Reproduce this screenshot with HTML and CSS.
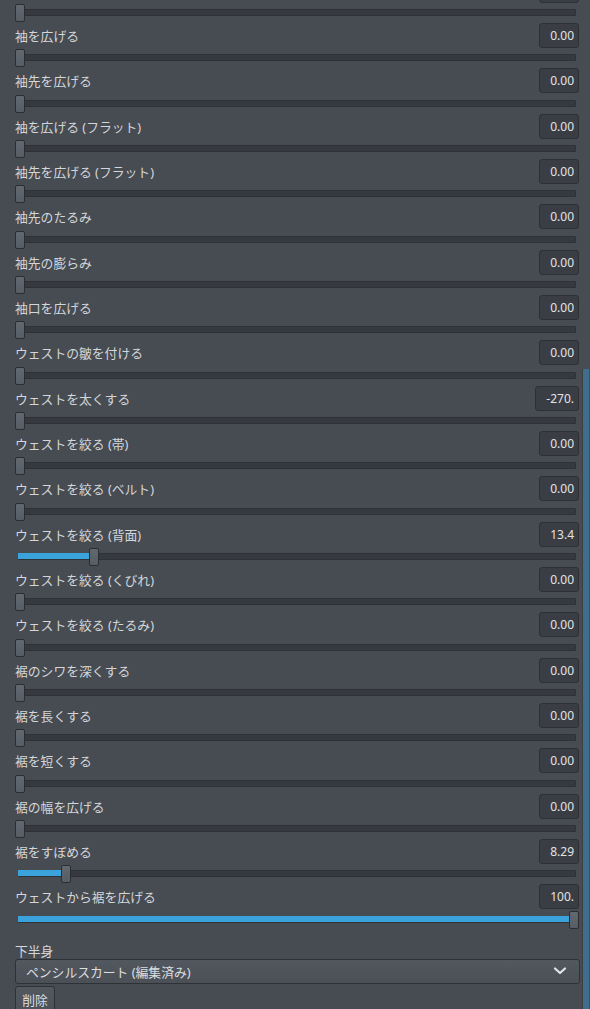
FILE: index.html
```html
<!DOCTYPE html>
<html lang="ja">
<head>
<meta charset="utf-8">
<link rel="stylesheet" href="styles.css">
</head>
<body>
<div class="window">
  <div class="panel">
    <div class="list">
      <div class="row first">
        <div class="head"><span class="label"></span><span class="num empty"></span></div>
        <div class="slider"><div class="track"></div><div class="thumb" style="left:0px"></div></div>
      </div>
      <div class="row">
        <div class="head"><span class="label">袖を広げる</span><span class="num">0.00</span></div>
        <div class="slider"><div class="track"></div><div class="thumb" style="left:0px"></div></div>
      </div>
      <div class="row">
        <div class="head"><span class="label">袖先を広げる</span><span class="num">0.00</span></div>
        <div class="slider"><div class="track"></div><div class="thumb" style="left:0px"></div></div>
      </div>
      <div class="row">
        <div class="head"><span class="label">袖を広げる (フラット)</span><span class="num">0.00</span></div>
        <div class="slider"><div class="track"></div><div class="thumb" style="left:0px"></div></div>
      </div>
      <div class="row">
        <div class="head"><span class="label">袖先を広げる (フラット)</span><span class="num">0.00</span></div>
        <div class="slider"><div class="track"></div><div class="thumb" style="left:0px"></div></div>
      </div>
      <div class="row">
        <div class="head"><span class="label">袖先のたるみ</span><span class="num">0.00</span></div>
        <div class="slider"><div class="track"></div><div class="thumb" style="left:0px"></div></div>
      </div>
      <div class="row">
        <div class="head"><span class="label">袖先の膨らみ</span><span class="num">0.00</span></div>
        <div class="slider"><div class="track"></div><div class="thumb" style="left:0px"></div></div>
      </div>
      <div class="row">
        <div class="head"><span class="label">袖口を広げる</span><span class="num">0.00</span></div>
        <div class="slider"><div class="track"></div><div class="thumb" style="left:0px"></div></div>
      </div>
      <div class="row">
        <div class="head"><span class="label">ウェストの皺を付ける</span><span class="num">0.00</span></div>
        <div class="slider"><div class="track"></div><div class="thumb" style="left:0px"></div></div>
      </div>
      <div class="row">
        <div class="head"><span class="label">ウェストを太くする</span><span class="num">-270.</span></div>
        <div class="slider"><div class="track"></div><div class="thumb" style="left:0px"></div></div>
      </div>
      <div class="row">
        <div class="head"><span class="label">ウェストを絞る (帯)</span><span class="num">0.00</span></div>
        <div class="slider"><div class="track"></div><div class="thumb" style="left:0px"></div></div>
      </div>
      <div class="row">
        <div class="head"><span class="label">ウェストを絞る (ベルト)</span><span class="num">0.00</span></div>
        <div class="slider"><div class="track"></div><div class="thumb" style="left:0px"></div></div>
      </div>
      <div class="row">
        <div class="head"><span class="label">ウェストを絞る (背面)</span><span class="num">13.4</span></div>
        <div class="slider"><div class="track"></div><div class="fill" style="width:72px"></div><div class="thumb" style="left:74px"></div></div>
      </div>
      <div class="row">
        <div class="head"><span class="label">ウェストを絞る (くびれ)</span><span class="num">0.00</span></div>
        <div class="slider"><div class="track"></div><div class="thumb" style="left:0px"></div></div>
      </div>
      <div class="row">
        <div class="head"><span class="label">ウェストを絞る (たるみ)</span><span class="num">0.00</span></div>
        <div class="slider"><div class="track"></div><div class="thumb" style="left:0px"></div></div>
      </div>
      <div class="row">
        <div class="head"><span class="label">裾のシワを深くする</span><span class="num">0.00</span></div>
        <div class="slider"><div class="track"></div><div class="thumb" style="left:0px"></div></div>
      </div>
      <div class="row">
        <div class="head"><span class="label">裾を長くする</span><span class="num">0.00</span></div>
        <div class="slider"><div class="track"></div><div class="thumb" style="left:0px"></div></div>
      </div>
      <div class="row">
        <div class="head"><span class="label">裾を短くする</span><span class="num">0.00</span></div>
        <div class="slider"><div class="track"></div><div class="thumb" style="left:0px"></div></div>
      </div>
      <div class="row">
        <div class="head"><span class="label">裾の幅を広げる</span><span class="num">0.00</span></div>
        <div class="slider"><div class="track"></div><div class="thumb" style="left:0px"></div></div>
      </div>
      <div class="row">
        <div class="head"><span class="label">裾をすぼめる</span><span class="num">8.29</span></div>
        <div class="slider"><div class="track"></div><div class="fill" style="width:43px"></div><div class="thumb" style="left:46px"></div></div>
      </div>
      <div class="row">
        <div class="head"><span class="label">ウェストから裾を広げる</span><span class="num">100.</span></div>
        <div class="slider"><div class="track"></div><div class="fill" style="width:551px"></div><div class="thumb" style="left:554px"></div></div>
      </div>
    </div>
    <div class="section">
      <div class="section-title">下半身</div>
      <div class="combo">
        <span class="combo-text">ペンシルスカート (編集済み)</span>
        <svg class="chevron" width="14" height="10" viewBox="0 0 14 10"><path d="M2 2.5 L7 7 L12 2.5" fill="none" stroke="#e2e4e6" stroke-width="2.2" stroke-linecap="round" stroke-linejoin="round"/></svg>
      </div>
      <div class="actions"><button class="btn">削除</button></div>
    </div>
  </div>
  <div class="scrollbar"><div class="scroll-thumb"></div></div>
</div>
</body>
</html>
```
FILE: styles.css
```css
html, body {
  margin: 0;
  padding: 0;
  background: #474c53;
  height: 100%;
  overflow: hidden;
}
body {
  font-family: "Noto Sans", "Noto Sans CJK JP", sans-serif;
  font-size: 12.8px;
  color: #d4d6d8;
}
.window {
  display: flex;
  width: 590px;
  height: 1009px;
  overflow: hidden;
}
.panel {
  width: 564px;
  padding: 0 3px 0 15px;
  flex: none;
}
.list {
  display: flex;
  flex-direction: column;
}
.row {
  height: 45.33px;
  display: flex;
  flex-direction: column;
}
.row.first {
  margin-top: -22.33px;
}
.head {
  height: 25.33px;
  display: flex;
  align-items: flex-start;
  justify-content: space-between;
}
.label {
  line-height: 27px;
  white-space: nowrap;
  color: #d4d6d9;
}
.num {
  box-sizing: border-box;
  height: 25px;
  line-height: 23px;
  padding: 0 4px 0 10px;
  background: #3a3e44;
  border: 1px solid #2d3136;
  border-radius: 3px;
  color: #e2e3e5;
  font-family: "Noto Sans", sans-serif;
  font-size: 12px;
}
.num.empty {
  width: 40px;
}
.slider {
  position: relative;
  height: 20px;
}
.track {
  position: absolute;
  left: 3px;
  right: 3px;
  top: 6px;
  height: 7px;
  box-sizing: border-box;
  background: #363a40;
  border: 1px solid #2e3237;
  border-radius: 1px;
}
.fill {
  position: absolute;
  left: 3px;
  top: 6px;
  height: 6px;
  background: #3aa3dc;
}
.thumb {
  position: absolute;
  top: 1px;
  width: 10px;
  height: 18px;
  box-sizing: border-box;
  background: linear-gradient(#626870, #575d64);
  border: 1px solid #2a2e32;
  border-radius: 2px;
}
.section {
  padding-top: 10px;
}
.section-title {
  height: 19px;
  line-height: 22px;
  color: #d4d6d9;
}
.combo {
  box-sizing: border-box;
  height: 25px;
  margin-right: -1px;
  display: flex;
  align-items: center;
  justify-content: space-between;
  padding: 0 12px 0 10px;
  background: linear-gradient(#52585f, #4b5057);
  border: 1px solid #2e3237;
  border-radius: 3px;
  color: #dcdee0;
}
.combo-text {
  white-space: nowrap;
}
.chevron {
  display: block;
}
.actions {
  margin-top: 2px;
}
.btn {
  box-sizing: border-box;
  height: 28px;
  width: 40px;
  padding: 0;
  text-align: center;
  font: inherit;
  color: #dcdee0;
  background: linear-gradient(#52585f, #4b5057);
  border: 1px solid #2e3237;
  border-radius: 3px;
  line-height: 24px;
}
.scrollbar {
  width: 8px;
  flex: none;
  display: flex;
  flex-direction: column;
  background: #474c53;
}
.scroll-thumb {
  margin-top: 369px;
  flex: 1;
  width: 7px;
  background: #3f6e8d;
  border-left: 1px solid #3a4046;
  box-sizing: border-box;
}
```
